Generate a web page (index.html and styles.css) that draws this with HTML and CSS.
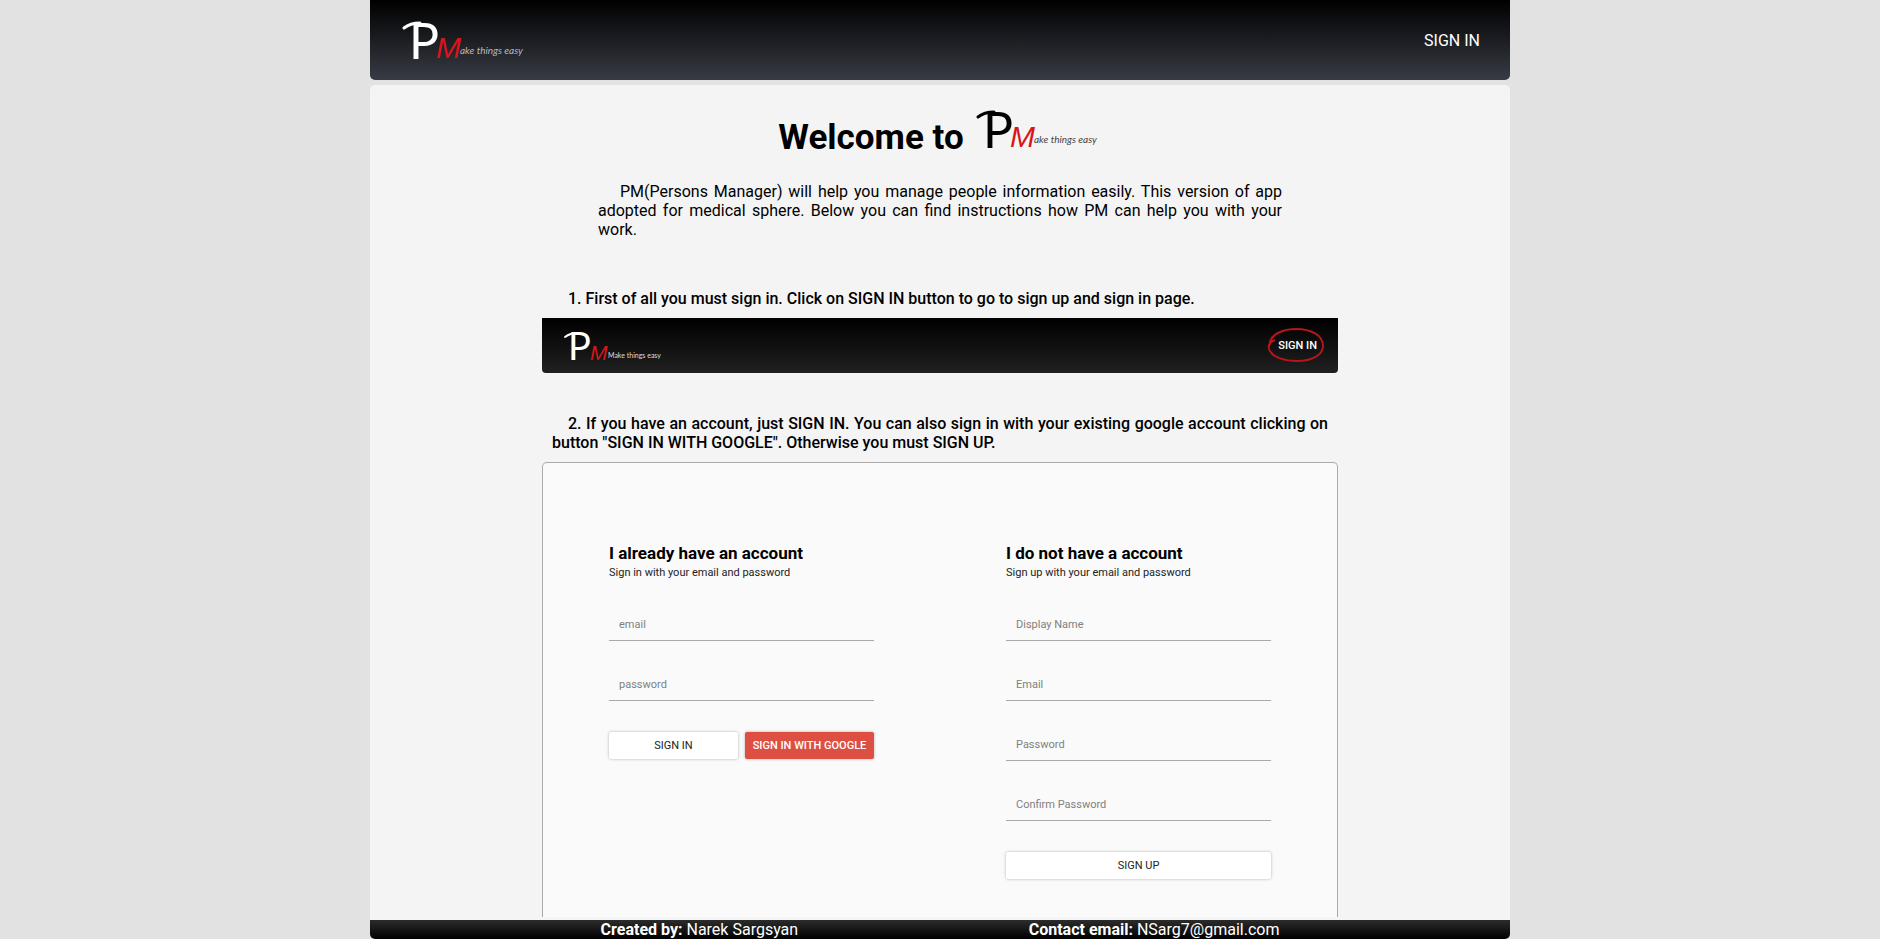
FILE: index.html
```html
<!DOCTYPE html>
<html lang="en">
<head>
<meta charset="utf-8">
<meta name="viewport" content="width=device-width, initial-scale=1">
<title>PM - Persons Manager</title>
<link rel="stylesheet" href="styles.css">
</head>
<body>
<div class="app">
  <header class="header">
    <a class="logo-link" href="#" aria-label="PM home">
      <svg class="logo logo-light" viewBox="0 0 128 44">
        <path class="swash" d="M4 10C9 6 14 5 20 5"/>
        <text class="logo-p" x="9" y="41">P</text>
        <text class="logo-m" x="36" y="40">M</text>
        <text class="logo-tag" x="60" y="36">ake things easy</text>
      </svg>
    </a>
    <a class="nav-link" href="#">SIGN IN</a>
  </header>

  <main class="main">
    <h1 class="welcome">
      <span>Welcome to</span>
      <svg class="logo" viewBox="0 0 128 44" role="img" aria-label="PM">
        <path class="swash" d="M4 10C9 6 14 5 20 5"/>
        <text class="logo-p" x="9" y="41">P</text>
        <text class="logo-m" x="36" y="40">M</text>
        <text class="logo-tag" x="60" y="36">ake things easy</text>
      </svg>
    </h1>
    <p class="intro">PM(Persons Manager) will help you manage people information easily. This version of app adopted for medical sphere. Below you can find instructions how PM can help you with your work.</p>

    <section class="step">
      <p class="step-text">1. First of all you must sign in. Click on SIGN IN button to go to sign up and sign in page.</p>
      <div class="bar">
        <svg class="logo-small" viewBox="0 0 100 34" role="img" aria-label="PM">
          <path class="swash" d="M2 8C6 5 10 4 14 4"/>
          <text class="small-p" x="5" y="31">P</text>
          <text class="small-m" x="27" y="31">M</text>
          <text class="small-tag" x="45" y="29">Make things easy</text>
        </svg>
        <a class="bar-link" href="#">SIGN IN
          <svg class="ring" viewBox="0 0 60 36" aria-hidden="true">
            <path d="M9 13C4 15 2 18 3 22C6 31 20 34 31 34C46 34 57 28 57 19C57 8 45 2 30 2C17 2 6 7 4 15L4 18"/>
          </svg>
        </a>
      </div>
    </section>

    <section class="step step-fill">
      <p class="step-text">2. If you have an account, just SIGN IN. You can also sign in with your existing google account clicking on button "SIGN IN WITH GOOGLE". Otherwise you must SIGN UP.</p>
      <div class="card">
        <form class="form">
          <h2 class="form-title">I already have an account</h2>
          <p class="form-sub">Sign in with your email and password</p>
          <input class="field" type="email" placeholder="email" aria-label="email">
          <input class="field" type="password" placeholder="password" aria-label="password">
          <div class="actions">
            <button class="btn" type="button">SIGN IN</button>
            <button class="btn btn-google" type="button">SIGN IN WITH GOOGLE</button>
          </div>
        </form>
        <form class="form">
          <h2 class="form-title">I do not have a account</h2>
          <p class="form-sub">Sign up with your email and password</p>
          <input class="field" type="text" placeholder="Display Name" aria-label="Display Name">
          <input class="field" type="email" placeholder="Email" aria-label="Email">
          <input class="field" type="password" placeholder="Password" aria-label="Password">
          <input class="field" type="password" placeholder="Confirm Password" aria-label="Confirm Password">
          <div class="actions">
            <button class="btn" type="button">SIGN UP</button>
          </div>
        </form>
      </div>
    </section>
  </main>

  <footer class="footer">
    <span><b>Created by:</b> Narek Sargsyan</span>
    <span><b>Contact email:</b> NSarg7@gmail.com</span>
  </footer>
</div>
</body>
</html>
```

FILE: styles.css
```css
* { box-sizing: border-box; }

body {
  margin: 0;
  background: #e2e2e2;
  color: #000;
  font: 16px/19px Roboto, "Liberation Sans", sans-serif;
}

h1, h2, p { margin: 0; }
a { color: inherit; text-decoration: none; }

.app {
  display: flex;
  flex-direction: column;
  max-width: 1140px;
  min-height: 100vh;
  margin: 0 auto;
}

.header {
  display: flex;
  align-items: center;
  justify-content: space-between;
  height: 80px;
  padding: 0 30px;
  margin-bottom: 5px;
  background: linear-gradient(#000, #383b44);
  border-radius: 0 0 5px 5px;
  color: #fff;
}

.logo-link { display: flex; }

.logo, .logo-small {
  display: block;
  overflow: visible;
  font-family: Lato, sans-serif;
  font-weight: 400;
}
.logo { width: 128px; height: 44px; }
.logo-p { font-size: 50px; fill: #000; }
.logo-m, .small-m {
  font-family: "Liberation Sans Narrow", "Liberation Sans", sans-serif;
  font-style: italic;
  fill: #d9151b;
}
.logo-m { font-size: 30px; }
.logo-tag { font-size: 10px; fill: #444; font-style: italic; }
.swash { fill: none; stroke: #000; stroke-width: 3; stroke-linecap: round; }
.logo-light .logo-p { fill: #fff; }
.logo-light .logo-tag { fill: #bbb; }
.logo-light .swash, .logo-small .swash { stroke: #fff; }
.logo-small .swash { stroke-width: 2; }

.main {
  flex: 1;
  display: flex;
  flex-direction: column;
  align-items: center;
  padding: 22px 0 3px;
  background: #f4f4f4;
  border-radius: 5px 5px 0 0;
}

.welcome {
  display: flex;
  align-items: center;
  gap: 10px;
  font-size: 35px;
  line-height: 62px;
  margin-bottom: 13px;
}
.welcome .logo { margin-bottom: 18px; }

.intro {
  width: 60%;
  margin-bottom: 40px;
  text-align: justify;
  text-indent: 22px;
}

.step { width: 70%; margin-bottom: 31px; padding: 0 1px; }
.step-fill { flex: 1; display: flex; flex-direction: column; margin-bottom: 0; }
.step-text {
  padding: 10px;
  font-weight: 500;
  text-align: justify;
  text-indent: 16px;
}

.bar {
  display: flex;
  align-items: center;
  justify-content: space-between;
  height: 55px;
  padding: 0 21px;
  background: linear-gradient(#000, #202020);
  border-radius: 0 0 4px 4px;
  color: #fff;
}
.logo-small { width: 100px; height: 34px; }
.small-p { font-size: 38px; fill: #fff; }
.small-m { font-size: 21px; }
.small-tag { font-size: 7px; fill: #ddd; }
.bar-link { position: relative; font-size: 11px; font-weight: 500; }
.ring {
  position: absolute;
  top: -9px;
  left: -12px;
  width: 60px;
  height: 36px;
  fill: none;
  stroke: #b3161b;
  stroke-width: 2;
}

.card {
  flex: 1;
  display: grid;
  grid-template-columns: 1fr 1fr;
  gap: 132px;
  padding: 78px 66px 36px;
  background: #fafafa;
  border: 1px solid #aaa;
  border-bottom: 0;
  border-radius: 5px 5px 0 0;
}

.form-title { font-size: 17px; line-height: 24px; }
.form-sub { font-size: 11px; line-height: 16px; color: #222; margin-bottom: 26px; }

.field {
  display: block;
  width: 100%;
  height: 34px;
  margin-bottom: 26px;
  padding: 2px 10px 0;
  border: 0;
  border-bottom: 1px solid #aaa;
  background: transparent;
  font: 11px Roboto, sans-serif;
}
.field::placeholder { color: #808080; opacity: 1; }

.actions { display: flex; gap: 7px; padding-top: 5px; }
.btn {
  flex: 1 1 0;
  height: 27px;
  padding: 0;
  border: 0;
  border-radius: 2px;
  background: #fff;
  box-shadow: 0 0 3px rgba(0, 0, 0, 0.3);
  color: #222;
  font: 11px Roboto, sans-serif;
  white-space: nowrap;
}
.btn-google { background: #dd4f43; color: #fff; font-weight: 500; }

.footer {
  display: flex;
  justify-content: space-evenly;
  height: 19px;
  background: linear-gradient(#2c2c2c, #000);
  border-radius: 0 0 5px 5px;
  color: #fff;
}
```
